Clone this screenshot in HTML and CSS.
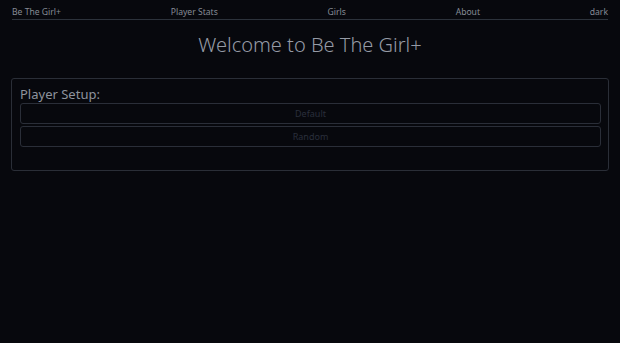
FILE: index.html
```html
<!DOCTYPE html>
<html lang="en">
<head>
    <meta charset="UTF-8">
    <title>Be The Girl+</title>
    <link rel="stylesheet" href="styles.css">
</head>
<body>
    <div class="nav">
        <a href="javascript:;">Be The Girl+</a>
        <a href="javascript:;">Player Stats</a>
        <a href="javascript:;">Girls</a>
        <a href="javascript:;">About</a>
        <a href="javascript:;">dark</a>
    </div>
    <h1 class="title">Welcome to Be The Girl+</h1>
    <div class="card">
        <h2 class="card-title">Player Setup:</h2>
        <button class="btn">Default</button>
        <button class="btn">Random</button>
    </div>
</body>
</html>
```
FILE: styles.css
```css
* {
    margin: 0;
    padding: 0;
    box-sizing: border-box;
}
body {
    background: #07080d;
    color: #8c919b;
    font-family: "Noto Sans", "DejaVu Sans", sans-serif;
    height: 343px;
    overflow: hidden;
}
.nav {
    display: flex;
    justify-content: space-between;
    margin: 0 12px;
    padding-top: 6px;
    height: 20px;
    border-bottom: 1px solid #2c323b;
}
.nav a {
    color: #868b95;
    text-decoration: none;
    font-size: 8.6px;
    line-height: 13px;
}
.title {
    text-align: center;
    font-weight: 300;
    font-size: 20px;
    line-height: 26px;
    margin-top: 12px;
    color: #959aa5;
}
.card {
    margin: 20px 11px 0 11px;
    border: 1px solid #2a2e37;
    border-radius: 3px;
    padding: 6px 7px 21px 8px;
}
.card-title {
    font-weight: 400;
    font-size: 13px;
    line-height: 18px;
    color: #8e939d;
}
.btn {
    display: block;
    width: 100%;
    height: 21px;
    margin-bottom: 2px;
    background: transparent;
    border: 1px solid #2a2e38;
    border-radius: 3px;
    color: #2a2f3c;
    font-family: inherit;
    font-size: 9px;
}
```
